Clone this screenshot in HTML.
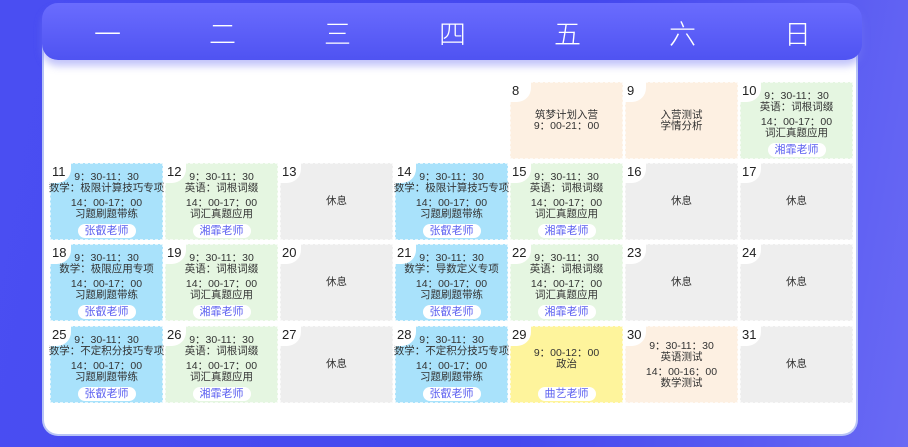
<!DOCTYPE html>
<html><head><meta charset="utf-8"><style>
*{margin:0;padding:0;box-sizing:border-box}
body{width:908px;height:447px;overflow:hidden;position:relative;font-family:"Liberation Sans","Noto Sans CJK SC",sans-serif;
background:linear-gradient(100deg,#4a4ef2 0%,#4448ee 60%,#5a5cf2 85%,#6a6af4 100%);}
.panel{position:absolute;left:42px;top:40px;width:816px;height:396px;background:#fff;border-radius:0 0 16px 16px;border:2px solid #b8c4f6;border-top:none}
.hdr{position:absolute;left:42px;top:3px;width:820px;height:57px;border-radius:16px;background:linear-gradient(180deg,#6a6cfe,#4f53f2);box-shadow:0 6px 8px rgba(120,125,245,.45)}
.hd{position:absolute;top:10px;width:115px;text-align:center;color:#fff;font-size:27px;font-family:"Noto Sans CJK SC",sans-serif;font-weight:300}
.c{position:absolute;width:113px;height:77px;display:flex;flex-direction:column;justify-content:center;align-items:center;font-size:10.5px;color:#333;line-height:11px;text-align:center;outline:1px dashed rgba(255,255,255,.7);outline-offset:-1px;white-space:nowrap}
.c.p{padding-bottom:16px;padding-top:4px}
.n{position:absolute;left:0;top:0;width:21px;height:20px;background:#fff;border-bottom-right-radius:14px;font-size:13px;color:#222;padding:2px 0 0 2px;line-height:14px;text-align:left}
.g{margin:2px 0}
.pill{position:absolute;bottom:2px;left:50%;transform:translateX(-50%);width:58px;height:14px;border-radius:7px;background:#fff;color:#5a5ef0;font-size:11px;line-height:14px}
.b{background:#a9e2fb}.gr{background:#e5f6e1}.pe{background:#fdf0e2}.gy{background:#eeeeee}.y{background:#fef49c}
</style></head><body>
<div class="panel"></div>
<div class="hdr">
<div class="hd" style="left:8px">一</div><div class="hd" style="left:123px">二</div><div class="hd" style="left:238px">三</div><div class="hd" style="left:353px">四</div><div class="hd" style="left:468px">五</div><div class="hd" style="left:583px">六</div><div class="hd" style="left:698px">日</div>
</div>

<div class="c pe" style="left:510px;top:82px"><div class="n">8</div><div>筑梦计划入营</div><div>9：00-21：00</div></div>
<div class="c pe" style="left:625px;top:82px"><div class="n">9</div><div>入营测试</div><div>学情分析</div></div>
<div class="c gr p" style="left:740px;top:82px"><div class="n">10</div><div class="g"><div>9：30-11：30</div><div>英语：词根词缀</div></div><div class="g"><div>14：00-17：00</div><div>词汇真题应用</div></div><div class="pill">湘霏老师</div></div>

<div class="c b p" style="left:50px;top:163px"><div class="n">11</div><div class="g"><div>9：30-11：30</div><div>数学：极限计算技巧专项</div></div><div class="g"><div>14：00-17：00</div><div>习题刷题带练</div></div><div class="pill">张叡老师</div></div>
<div class="c gr p" style="left:165px;top:163px"><div class="n">12</div><div class="g"><div>9：30-11：30</div><div>英语：词根词缀</div></div><div class="g"><div>14：00-17：00</div><div>词汇真题应用</div></div><div class="pill">湘霏老师</div></div>
<div class="c gy" style="left:280px;top:163px"><div class="n">13</div><div>休息</div></div>
<div class="c b p" style="left:395px;top:163px"><div class="n">14</div><div class="g"><div>9：30-11：30</div><div>数学：极限计算技巧专项</div></div><div class="g"><div>14：00-17：00</div><div>习题刷题带练</div></div><div class="pill">张叡老师</div></div>
<div class="c gr p" style="left:510px;top:163px"><div class="n">15</div><div class="g"><div>9：30-11：30</div><div>英语：词根词缀</div></div><div class="g"><div>14：00-17：00</div><div>词汇真题应用</div></div><div class="pill">湘霏老师</div></div>
<div class="c gy" style="left:625px;top:163px"><div class="n">16</div><div>休息</div></div>
<div class="c gy" style="left:740px;top:163px"><div class="n">17</div><div>休息</div></div>

<div class="c b p" style="left:50px;top:244px"><div class="n">18</div><div class="g"><div>9：30-11：30</div><div>数学：极限应用专项</div></div><div class="g"><div>14：00-17：00</div><div>习题刷题带练</div></div><div class="pill">张叡老师</div></div>
<div class="c gr p" style="left:165px;top:244px"><div class="n">19</div><div class="g"><div>9：30-11：30</div><div>英语：词根词缀</div></div><div class="g"><div>14：00-17：00</div><div>词汇真题应用</div></div><div class="pill">湘霏老师</div></div>
<div class="c gy" style="left:280px;top:244px"><div class="n">20</div><div>休息</div></div>
<div class="c b p" style="left:395px;top:244px"><div class="n">21</div><div class="g"><div>9：30-11：30</div><div>数学：导数定义专项</div></div><div class="g"><div>14：00-17：00</div><div>习题刷题带练</div></div><div class="pill">张叡老师</div></div>
<div class="c gr p" style="left:510px;top:244px"><div class="n">22</div><div class="g"><div>9：30-11：30</div><div>英语：词根词缀</div></div><div class="g"><div>14：00-17：00</div><div>词汇真题应用</div></div><div class="pill">湘霏老师</div></div>
<div class="c gy" style="left:625px;top:244px"><div class="n">23</div><div>休息</div></div>
<div class="c gy" style="left:740px;top:244px"><div class="n">24</div><div>休息</div></div>

<div class="c b p" style="left:50px;top:326px"><div class="n">25</div><div class="g"><div>9：30-11：30</div><div>数学：不定积分技巧专项</div></div><div class="g"><div>14：00-17：00</div><div>习题刷题带练</div></div><div class="pill">张叡老师</div></div>
<div class="c gr p" style="left:165px;top:326px"><div class="n">26</div><div class="g"><div>9：30-11：30</div><div>英语：词根词缀</div></div><div class="g"><div>14：00-17：00</div><div>词汇真题应用</div></div><div class="pill">湘霏老师</div></div>
<div class="c gy" style="left:280px;top:326px"><div class="n">27</div><div>休息</div></div>
<div class="c b p" style="left:395px;top:326px"><div class="n">28</div><div class="g"><div>9：30-11：30</div><div>数学：不定积分技巧专项</div></div><div class="g"><div>14：00-17：00</div><div>习题刷题带练</div></div><div class="pill">张叡老师</div></div>
<div class="c y p" style="left:510px;top:326px"><div class="n">29</div><div>9：00-12：00</div><div>政治</div><div class="pill">曲艺老师</div></div>
<div class="c pe" style="left:625px;top:326px"><div class="n">30</div><div class="g"><div>9：30-11：30</div><div>英语测试</div></div><div class="g"><div>14：00-16：00</div><div>数学测试</div></div></div>
<div class="c gy" style="left:740px;top:326px"><div class="n">31</div><div>休息</div></div>
</body></html>
